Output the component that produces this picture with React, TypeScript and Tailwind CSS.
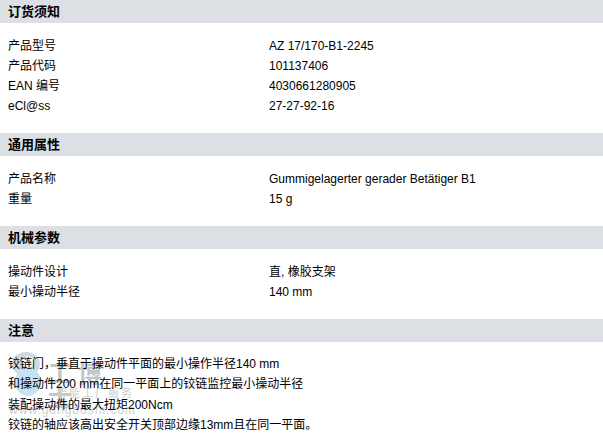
import React from "react";

const font = { fontFamily: '"Liberation Sans", Arial, "Noto Sans CJK SC", sans-serif' };

function Header({ title }: { title: string }) {
  return (
    <div className="h-[23px] bg-[#dcdfe3] px-2 flex items-center text-[13px] font-bold text-black">
      {title}
    </div>
  );
}

function Rows({ rows }: { rows: [string, string][] }) {
  return (
    <div className="pt-[13px] pb-[17px] px-2">
      {rows.map(([k, v]) => (
        <div key={k} className="grid grid-cols-[261px_1fr] h-5 leading-5 text-[12px] text-black">
          <div>{k}</div>
          <div>{v}</div>
        </div>
      ))}
    </div>
  );
}

export default function App() {
  return (
    <div className="w-[603px] h-[433px] bg-white overflow-hidden relative" style={font}>
      <Header title="订货须知" />
      <Rows
        rows={[
          ["产品型号", "AZ 17/170-B1-2245"],
          ["产品代码", "101137406"],
          ["EAN 编号", "4030661280905"],
          ["eCl@ss", "27-27-92-16"],
        ]}
      />
      <Header title="通用属性" />
      <Rows
        rows={[
          ["产品名称", "Gummigelagerter gerader Betätiger B1"],
          ["重量", "15 g"],
        ]}
      />
      <Header title="机械参数" />
      <Rows
        rows={[
          ["操动件设计", "直, 橡胶支架"],
          ["最小操动半径", "140 mm"],
        ]}
      />
      <Header title="注意" />
      <div className="relative pt-[12px] px-2 text-[12px] leading-[20.4px] text-black">
        <div className="absolute left-[4px] top-[6px] w-[130px] h-[80px] pointer-events-none">
          <svg width="44" height="50" viewBox="0 0 44 50" className="absolute left-[2px] top-0 opacity-50">
            <ellipse cx="20" cy="16" rx="14" ry="12" fill="#9fb6c8" />
            <ellipse cx="22" cy="34" rx="13" ry="14" fill="#8fc7ea" />
            <circle cx="22" cy="14" r="6" fill="#f1e7da" />
          </svg>
          <div className="absolute left-[44px] top-[12px] text-[24px] font-bold text-[#c4c4c4] tracking-[6px] leading-none" style={{ fontFamily: '"Noto Sans CJK SC", sans-serif' }}>
            工博士
          </div>
          <div className="absolute left-[52px] top-[39px] text-[11px] text-[#d0d0d0] tracking-[2px] leading-none" style={{ fontFamily: '"Noto Sans CJK SC", sans-serif' }}>
            智能工厂服务商
          </div>
          <div className="absolute left-[5px] top-[56px] text-[12px] text-[#d0d0d0] tracking-[1px] leading-none">
            www.gongboshi.com
          </div>
        </div>
        <div className="relative">
          <div>铰链门，垂直于操动件平面的最小操作半径140 mm</div>
          <div>和操动件200 mm在同一平面上的铰链监控最小操动半径</div>
          <div>装配操动件的最大扭矩200Ncm</div>
          <div>铰链的轴应该高出安全开关顶部边缘13mm且在同一平面。</div>
        </div>
      </div>
    </div>
  );
}
